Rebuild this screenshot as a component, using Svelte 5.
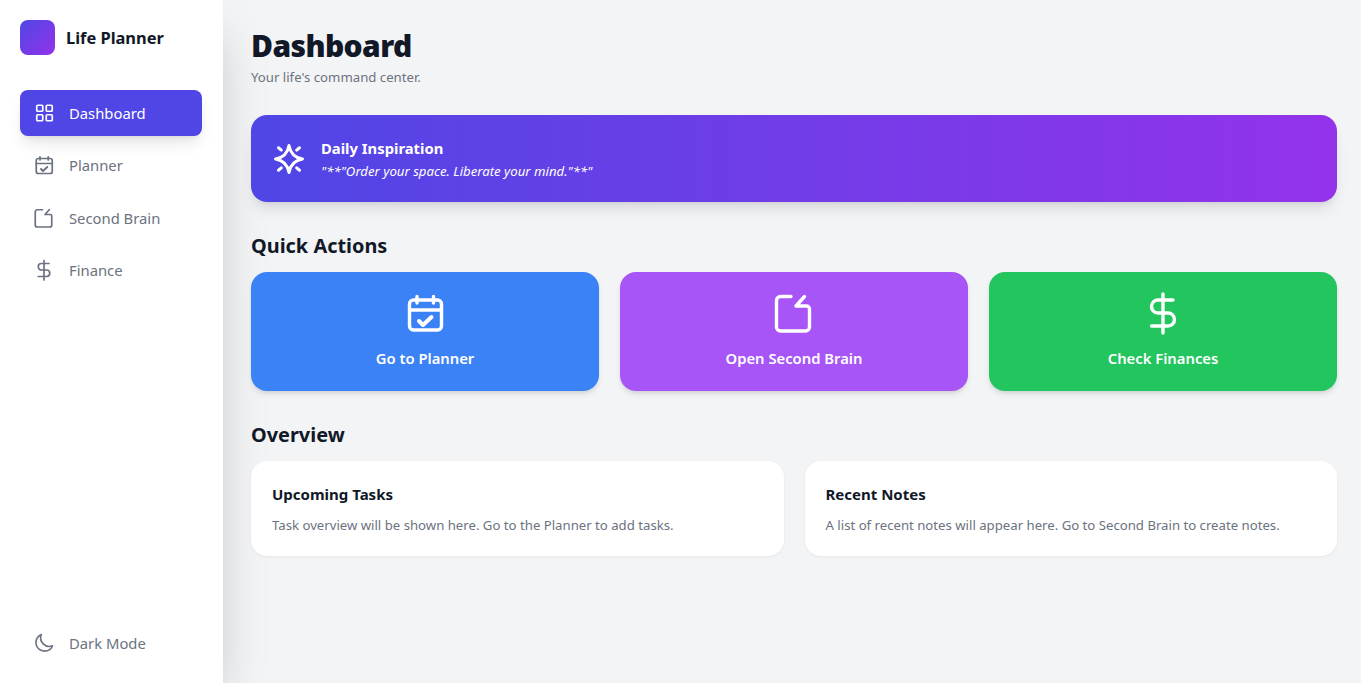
<script>
  const nav = [
    { name: 'Dashboard', icon: 'grid', active: true },
    { name: 'Planner', icon: 'calendar' },
    { name: 'Second Brain', icon: 'note' },
    { name: 'Finance', icon: 'dollar' }
  ];
  const actions = [
    { label: 'Go to Planner', icon: 'calendar', color: 'blue' },
    { label: 'Open Second Brain', icon: 'note', color: 'purple' },
    { label: 'Check Finances', icon: 'dollar', color: 'green' }
  ];
  const overview = [
    { title: 'Upcoming Tasks', text: 'Task overview will be shown here. Go to the Planner to add tasks.' },
    { title: 'Recent Notes', text: 'A list of recent notes will appear here. Go to Second Brain to create notes.' }
  ];
</script>

{#snippet icon(name, size)}
  <svg xmlns="http://www.w3.org/2000/svg" width={size} height={size} viewBox="0 0 24 24" fill="none" stroke="currentColor" stroke-width="1.7" stroke-linecap="round" stroke-linejoin="round">
    {#if name === 'grid'}
      <rect x="4.75" y="4.25" width="6" height="6" rx="1"/>
      <rect x="14.25" y="4.25" width="6" height="6" rx="1"/>
      <rect x="4.75" y="13.75" width="6" height="6" rx="1"/>
      <rect x="14.25" y="13.75" width="6" height="6" rx="1"/>
    {:else if name === 'calendar'}
      <rect x="4.25" y="5.5" width="16" height="15" rx="2"/>
      <path d="M8 3.75v3.25M16.25 3.75v3.25M4.25 10.5h16"/>
      <path stroke-width="2" d="M9 16l2 2 4.25-4"/>
    {:else if name === 'note'}
      <path d="M10.5 3.75H5.25a2 2 0 0 0-2 2v13.25a2 2 0 0 0 2 2H17.75a2 2 0 0 0 2-2V10a1.5 1.5 0 0 0-1.5-1.5H13l4.25-4.75"/>
    {:else if name === 'dollar'}
      <path d="M12 2.5v19.5"/>
      <path d="M17 5.5H9.5a3.25 3.25 0 0 0 0 6.5h5a3.25 3.25 0 0 1 0 6.5H6.25"/>
    {:else if name === 'moon'}
      <path transform="translate(1 0) scale(0.96)" d="M20.354 15.354A9 9 0 0 1 8.646 3.646 9.003 9.003 0 0 0 12 21a9.003 9.003 0 0 0 8.354-5.646z"/>
    {:else if name === 'sparkle'}
      <path stroke-width="2" d="M12 3Q13.3 10.7 21 12 13.3 13.3 12 21 10.7 13.3 3 12 10.7 10.7 12 3z"/>
      <path stroke-width="2" d="M5 4.5l1.9 1.6M19 4.5l-1.9 1.6M5 19.5l1.9-1.6M19 19.5l-1.9-1.6"/>
    {/if}
  </svg>
{/snippet}

<div class="app">
  <aside class="sidebar">
    <div class="brand">
      <div class="logo"></div>
      <span class="brand-name">Life Planner</span>
    </div>
    <nav class="nav">
      {#each nav as item}
        <div class="nav-item" class:active={item.active}>
          {@render icon(item.icon, 24)}
          <span>{item.name}</span>
        </div>
      {/each}
    </nav>
    <div class="nav-item">
      {@render icon('moon', 24)}
      <span>Dark Mode</span>
    </div>
  </aside>

  <main class="main">
    <h1>Dashboard</h1>
    <p class="subtitle">Your life's command center.</p>

    <section class="banner">
      {@render icon('sparkle', 36)}
      <div>
        <div class="banner-title">Daily Inspiration</div>
        <div class="banner-quote">"**"Order your space. Liberate your mind."**"</div>
      </div>
    </section>

    <h2>Quick Actions</h2>
    <div class="actions">
      {#each actions as a}
        <div class="action {a.color}">
          {@render icon(a.icon, 48)}
          <span>{a.label}</span>
        </div>
      {/each}
    </div>

    <h2 class="overview-title">Overview</h2>
    <div class="overview">
      {#each overview as c}
        <div class="card">
          <h3>{c.title}</h3>
          <p>{c.text}</p>
        </div>
      {/each}
    </div>
  </main>
</div>

<style>
  :global(body) {
    margin: 0;
    font-family: "Noto Sans", "Open Sans", sans-serif;
    background: #f3f4f6;
  }
  .app {
    display: flex;
    height: 683px;
    overflow: hidden;
  }
  .sidebar {
    width: 223px;
    flex-shrink: 0;
    box-sizing: border-box;
    background: #fff;
    padding: 20px 21px 17px 20px;
    display: flex;
    flex-direction: column;
    box-shadow: 0 25px 50px -12px rgba(0,0,0,0.25);
  }
  .brand {
    display: flex;
    align-items: center;
    gap: 11px;
    margin-bottom: 35px;
  }
  .logo {
    width: 35px;
    height: 35px;
    border-radius: 8px;
    background: linear-gradient(135deg, #4f46e5, #9333ea);
  }
  .brand-name {
    font-size: 16.4px;
    font-weight: 700;
    color: #111827;
  }
  .nav {
    display: flex;
    flex-direction: column;
    gap: 6.33px;
    flex: 1;
  }
  .nav-item {
    display: flex;
    align-items: center;
    gap: 13px;
    height: 46px;
    padding: 0 12px;
    border-radius: 8px;
    font-size: 14.8px;
    color: #6b7280;
  }
  .nav-item.active {
    background: #4f46e5;
    color: #fff;
    box-shadow: 0 10px 15px -3px rgba(0,0,0,0.1), 0 4px 6px -4px rgba(0,0,0,0.1);
  }
  .main {
    flex: 1;
    min-width: 0;
    padding: 24px 24px 0 28px;
  }
  h1 {
    margin: 0;
    font-size: 30px;
    line-height: 44px;
    font-weight: 900;
    letter-spacing: -0.6px;
    color: #111827;
  }
  .subtitle {
    margin: 0;
    font-size: 13.2px;
    line-height: 18px;
    color: #6b7280;
  }
  .banner {
    margin-top: 29px;
    height: 87px;
    box-sizing: border-box;
    padding: 0 20px;
    display: flex;
    align-items: center;
    gap: 14px;
    border-radius: 16px;
    color: #fff;
    background: linear-gradient(90deg, #4f46e5, #9333ea);
    box-shadow: 0 10px 15px -3px rgba(0,0,0,0.1), 0 4px 6px -4px rgba(0,0,0,0.1);
  }
  .banner-title {
    font-size: 14.8px;
    font-weight: 700;
    line-height: 22px;
    margin-bottom: 2px;
  }
  .banner-quote {
    font-size: 13.2px;
    font-style: italic;
    line-height: 20px;
  }
  h2 {
    margin: 30px 0 12px;
    font-size: 19.9px;
    line-height: 28px;
    font-weight: 700;
    color: #111827;
  }
  .overview-title {
    margin-top: 30px;
  }
  .actions {
    display: grid;
    grid-template-columns: repeat(3, 1fr);
    gap: 21px;
  }
  .action {
    height: 119px;
    box-sizing: border-box;
    padding-top: 17px;
    border-radius: 16px;
    color: #fff;
    display: flex;
    flex-direction: column;
    align-items: center;
    gap: 11px;
    font-size: 14.8px;
    line-height: 20px;
    font-weight: 600;
    box-shadow: 0 4px 6px -1px rgba(0,0,0,0.1), 0 2px 4px -2px rgba(0,0,0,0.1);
  }
  .blue { background: #3b82f6; }
  .purple { background: #a855f7; }
  .green { background: #22c55e; }
  .overview {
    display: grid;
    grid-template-columns: repeat(2, 1fr);
    gap: 21px;
  }
  .card {
    background: #fff;
    border-radius: 16px;
    height: 95px;
    box-sizing: border-box;
    padding: 22px 21px;
    box-shadow: 0 1px 3px rgba(0,0,0,0.06);
  }
  h3 {
    margin: 0 0 11px;
    font-size: 15px;
    line-height: 22px;
    font-weight: 700;
    color: #111827;
  }
  .card p {
    margin: 0;
    font-size: 13.18px;
    line-height: 18px;
    color: #6b7280;
  }
</style>
